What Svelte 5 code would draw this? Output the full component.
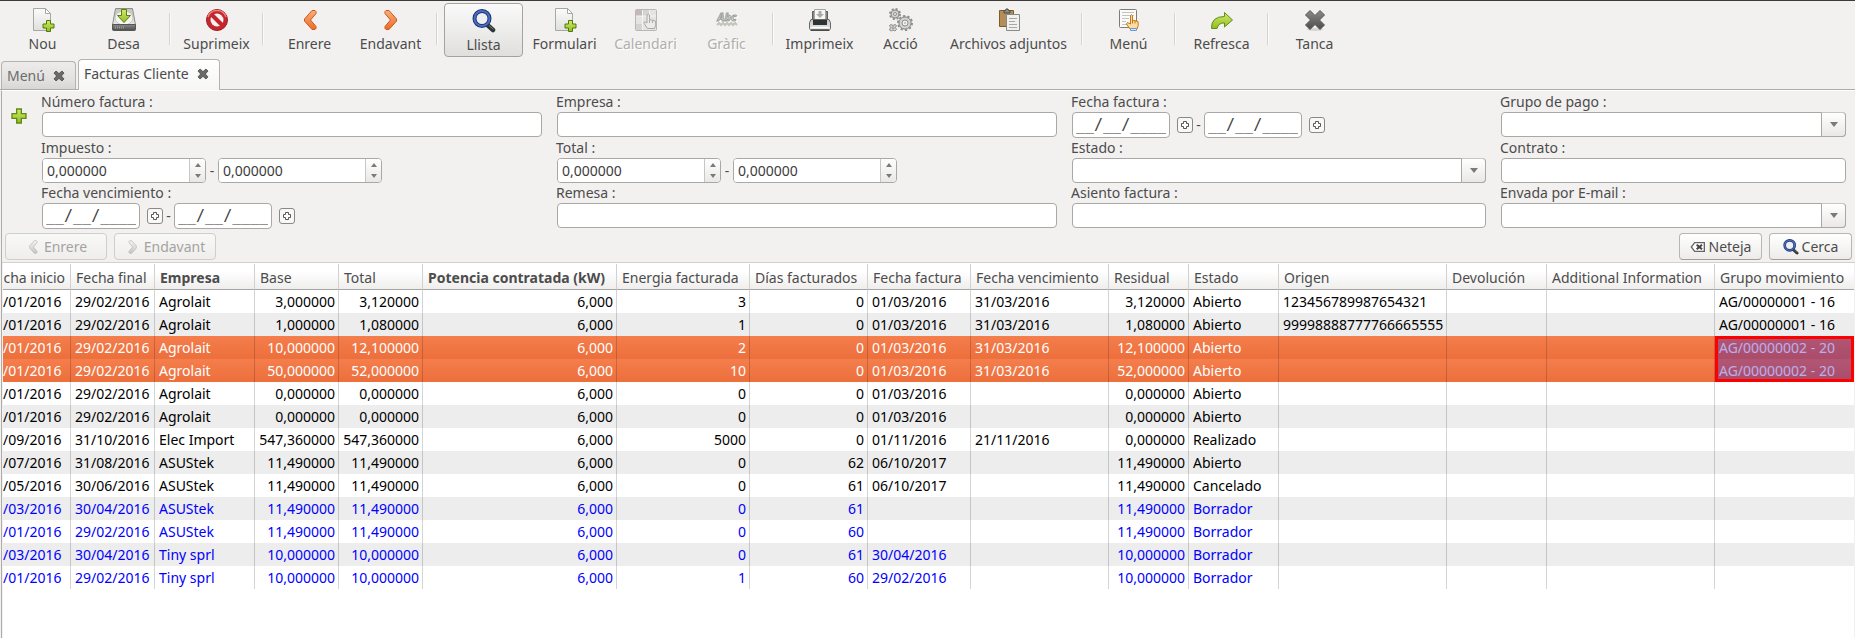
<script>
  const toolbar = [
    { label: 'Nou', icon: 'new' },
    { label: 'Desa', icon: 'save' },
    null,
    { label: 'Suprimeix', icon: 'delete' },
    null,
    { label: 'Enrere', icon: 'prev' },
    { label: 'Endavant', icon: 'next' },
    null,
    { label: 'Llista', icon: 'search', active: true },
    { label: 'Formulari', icon: 'new' },
    { label: 'Calendari', icon: 'calendar', disabled: true },
    { label: 'Gràfic', icon: 'graph', disabled: true },
    null,
    { label: 'Imprimeix', icon: 'print' },
    { label: 'Acció', icon: 'gears' },
    { label: 'Archivos adjuntos', icon: 'paste', wide: true },
    null,
    { label: 'Menú', icon: 'menu' },
    null,
    { label: 'Refresca', icon: 'refresh' },
    null,
    { label: 'Tanca', icon: 'close' }
  ];

  const fields = [
    { id: 'numero', label: 'Número factura :', type: 'text' },
    { id: 'empresa', label: 'Empresa :', type: 'text' },
    { id: 'fecha', label: 'Fecha factura :', type: 'date' },
    { id: 'grupo', label: 'Grupo de pago :', type: 'select' },
    { id: 'impuesto', label: 'Impuesto :', type: 'number' },
    { id: 'total', label: 'Total :', type: 'number' },
    { id: 'estado', label: 'Estado :', type: 'select' },
    { id: 'contrato', label: 'Contrato :', type: 'text' },
    { id: 'vencimiento', label: 'Fecha vencimiento :', type: 'date' },
    { id: 'remesa', label: 'Remesa :', type: 'text' },
    { id: 'asiento', label: 'Asiento factura :', type: 'text' },
    { id: 'envada', label: 'Envada por E-mail :', type: 'select' }
  ];

  const columns = [
    { name: 'cha inicio', width: 68, clipped: true },
    { name: 'Fecha final', width: 84 },
    { name: 'Empresa', width: 100, bold: true },
    { name: 'Base', width: 84, num: true },
    { name: 'Total', width: 84, num: true },
    { name: 'Potencia contratada (kW)', width: 194, num: true, bold: true },
    { name: 'Energia facturada', width: 133, num: true },
    { name: 'Días facturados', width: 118, num: true },
    { name: 'Fecha factura', width: 103 },
    { name: 'Fecha vencimiento', width: 138 },
    { name: 'Residual', width: 80, num: true },
    { name: 'Estado', width: 90 },
    { name: 'Origen', width: 168 },
    { name: 'Devolución', width: 100 },
    { name: 'Additional Information', width: 168 },
    { name: 'Grupo movimiento' }
  ];

  const rows = [
    ['/01/2016', '29/02/2016', 'Agrolait', '3,000000', '3,120000', '6,000', '3', '0', '01/03/2016', '31/03/2016', '3,120000', 'Abierto', '123456789987654321', '', '', 'AG/00000001 - 16'],
    ['/01/2016', '29/02/2016', 'Agrolait', '1,000000', '1,080000', '6,000', '1', '0', '01/03/2016', '31/03/2016', '1,080000', 'Abierto', '99998888777766665555', '', '', 'AG/00000001 - 16'],
    ['/01/2016', '29/02/2016', 'Agrolait', '10,000000', '12,100000', '6,000', '2', '0', '01/03/2016', '31/03/2016', '12,100000', 'Abierto', '', '', '', 'AG/00000002 - 20'],
    ['/01/2016', '29/02/2016', 'Agrolait', '50,000000', '52,000000', '6,000', '10', '0', '01/03/2016', '31/03/2016', '52,000000', 'Abierto', '', '', '', 'AG/00000002 - 20'],
    ['/01/2016', '29/02/2016', 'Agrolait', '0,000000', '0,000000', '6,000', '0', '0', '01/03/2016', '', '0,000000', 'Abierto', '', '', '', ''],
    ['/01/2016', '29/02/2016', 'Agrolait', '0,000000', '0,000000', '6,000', '0', '0', '01/03/2016', '', '0,000000', 'Abierto', '', '', '', ''],
    ['/09/2016', '31/10/2016', 'Elec Import', '547,360000', '547,360000', '6,000', '5000', '0', '01/11/2016', '21/11/2016', '0,000000', 'Realizado', '', '', '', ''],
    ['/07/2016', '31/08/2016', 'ASUStek', '11,490000', '11,490000', '6,000', '0', '62', '06/10/2017', '', '11,490000', 'Abierto', '', '', '', ''],
    ['/05/2016', '30/06/2016', 'ASUStek', '11,490000', '11,490000', '6,000', '0', '61', '06/10/2017', '', '11,490000', 'Cancelado', '', '', '', ''],
    ['/03/2016', '30/04/2016', 'ASUStek', '11,490000', '11,490000', '6,000', '0', '61', '', '', '11,490000', 'Borrador', '', '', '', ''],
    ['/01/2016', '29/02/2016', 'ASUStek', '11,490000', '11,490000', '6,000', '0', '60', '', '', '11,490000', 'Borrador', '', '', '', ''],
    ['/03/2016', '30/04/2016', 'Tiny sprl', '10,000000', '10,000000', '6,000', '0', '61', '30/04/2016', '', '10,000000', 'Borrador', '', '', '', ''],
    ['/01/2016', '29/02/2016', 'Tiny sprl', '10,000000', '10,000000', '6,000', '1', '60', '29/02/2016', '', '10,000000', 'Borrador', '', '', '', '']
  ];

  const selected = [2, 3];
</script>

{#snippet icon(name)}
  <svg class="icon" viewBox="0 0 24 24" aria-hidden="true">
    {#if name === 'new'}
      <path d="M2.5.5h12l5 5v17h-17z" fill="url(#g-paper)" stroke="#a6a8a4" />
      <path d="M14.5.5v5h5z" fill="#fff" stroke="#a6a8a4" stroke-linejoin="round" />
      <path d="M15.500 12.500h4v3.500h3.500v4h-3.500v3.500h-4v-3.500h-3.500v-4h3.500z" fill="url(#g-green)" stroke="#4f7a0b" />
    {:else if name === 'save'}
      <path d="M3.500.5h17l3 16.500h-23z" fill="url(#g-metal)" stroke="#8b8d89" stroke-linejoin="round" />
      <ellipse cx="12" cy="10" rx="9" ry="7" fill="#f4f4f3" stroke="#c3c4c1" />
      <path d="M.5 16.500h23v5q0 1-1 1h-21q-1 0-1-1z" fill="url(#g-dark)" stroke="#555753" />
      <path d="M3 19.500h9" stroke="#989a96" stroke-width="2" stroke-dasharray="1 1" />
      <path d="M9.500 1.500h5v6h4l-6.500 7-6.500-7h4z" fill="url(#g-green)" stroke="#5a7f0c" stroke-linejoin="round" />
    {:else if name === 'delete'}
      <circle cx="12" cy="12" r="10.500" fill="#c5262e" stroke="#a21b27" />
      <circle cx="12" cy="12" r="6.500" fill="#f5f2f0" />
      <path d="m7 7 10 10" stroke="#c5262e" stroke-width="4" />
      <path d="M3 9a9.500 9.500 0 0 1 18 0" fill="none" stroke="#ee7f7b" stroke-width="1.500" />
    {:else if name === 'prev'}
      <path d="M14 2.500h3l1 1v2L12.500 12l5.500 6.500v2l-1 1h-3L6.500 13v-2z" fill="url(#g-orange)" stroke="#c9581c" stroke-linejoin="round" />
    {:else if name === 'next'}
      <path d="M10 2.500H7l-1 1v2l5.500 6.500L6 18.500v2l1 1h3l7.500-8.500v-2z" fill="url(#g-orange)" stroke="#c9581c" stroke-linejoin="round" />
    {:else if name === 'search'}
      <path d="m16 16.500 5 4.500" stroke="#2e3436" stroke-width="4.500" stroke-linecap="round" />
      <path d="m17 16.500 4 3.500" stroke="#7d7f7b" stroke-linecap="round" />
      <circle cx="10" cy="9.500" r="7.500" fill="#eeeef2" stroke="#1e3472" stroke-width="4" />
      <circle cx="10" cy="9.500" r="7.500" fill="none" stroke="#4a6cc0" stroke-width="2" />
    {:else if name === 'calendar'}
      <rect x="1.500" y="1.500" width="21" height="21" rx="1" fill="#e6e4e2" stroke="#b9b7b4" />
      <path d="M2 2h7v6H2z" fill="#c4b9b7" />
      <path d="M9 2h6v6H9zM2 14h6v8H2z" fill="#d5d3d1" />
      <path d="M2 8h20M2 15h20M8.500 2v20M15.500 2v20" stroke="#f5f4f3" />
      <path d="M12.500 19 9.500 14.500q1-1.500 3.500.5V7q1.500-1.500 2.500 0v4.500l6 1.500q1 4-1 7.500h-7z" fill="#edebe9" stroke="#aaa8a5" stroke-linejoin="round" />
      <path d="M15.500 12v3M18.500 13v2" stroke="#aaa8a5" />
    {:else if name === 'graph'}
      <text x="12" y="13" text-anchor="middle" class="abc">Abc</text>
      <path d="m2 17 2-2 2 2 2-2 2 2 2-2 2 2 2-2 2 2 2-2 2 2" fill="none" stroke="#c2c4bc" stroke-width="2" />
    {:else if name === 'print'}
      <path d="M4.500 3.500h15v8h-15z" fill="#858783" stroke="#5d5f5b" />
      <path d="M6.500 1.500h11v10h-11z" fill="#f7f7f7" stroke="#a4a6a2" />
      <path d="M10.500 3h3v3h2.500l-4 4-4-4h2.500z" fill="#a9aba7" />
      <path d="M3 11.500h18l1.500 3v6q0 1-1 1h-19q-1 0-1-1v-6z" fill="url(#g-metal)" stroke="#666864" />
      <path d="M5 12h14v5H5z" fill="#2e3436" />
      <path d="M3 19.500h18" stroke="#fff" />
      <path d="M2.500 22.500h19" stroke="#4b4d49" />
    {:else if name === 'gears'}
      <g fill="#d2d3d0" stroke="#8d8f8b">
        <circle cx="6" cy="6" r="5" stroke-width="2" stroke-dasharray="2 1.930" />
        <circle cx="6" cy="6" r="4" />
        <circle cx="6" cy="6" r="1.500" fill="#f2f1f0" />
        <circle cx="16" cy="15" r="7" stroke-width="2" stroke-dasharray="2.200 2.200" />
        <circle cx="16" cy="15" r="6" />
        <circle cx="16" cy="15" r="3" fill="#f2f1f0" />
        <path d="M.5 17.500 2 16.500l2 1 2-1 1.500 1-1 2 1 2-1.500 1.500-2-1-2 1L.5 22l1-2.500z" />
        <circle cx="4" cy="19.700" r="1" fill="#f2f1f0" />
      </g>
      <circle cx="16" cy="15" r=".8" fill="#8d8f8b" />
    {:else if name === 'paste'}
      <path d="M2.500 2.500h14v16h-14z" fill="#b58d56" stroke="#7d5a2a" />
      <path d="M7 5V2.500h1.500L9 1h2l.5 1.500H13V5z" fill="#8c8e8a" stroke="#4b4d49" />
      <path d="M9.500 6.500h13v16h-13z" fill="#f0f1ef" stroke="#888a85" />
      <path d="M12 10.500h8M12 13.500h6M12 16.500h8M12 19.500h8" stroke="#a7a9a5" />
    {:else if name === 'menu'}
      <rect x="2.500" y="1.500" width="17" height="18" rx="1" fill="#fbfbfa" stroke="#7b7d79" />
      <path d="M5 4.500h12M5 7.500h12M5 10.500h7M5 13.500h4M5 16.500h5" stroke="#c2c4c0" />
      <path d="M13 21 9.500 16l1-1.500 3 1.500V7.500q1-1.500 2 0V12l5.500 1.500q1 4-1 7.500z" fill="#fcdca4" stroke="#c7780a" stroke-linejoin="round" />
      <path d="M15.500 12v3.500M18 13v2.500" stroke="#c7780a" />
      <path d="M13.500 20.500h6v2h-6z" fill="#dce8f6" stroke="#6c9ad0" />
    {:else if name === 'refresh'}
      <path d="M1.500 20.500Q1 8.500 14.500 8.500v-4l8 7.500-8 7v-4q-6-.5-7.500 5.500z" fill="url(#g-green)" stroke="#5e8f14" stroke-linejoin="round" />
    {:else if name === 'close'}
      <ellipse cx="12" cy="21.500" rx="8" ry="1.500" fill="#d6d4d2" />
      <path d="M2.500 7 7 2.500l5 5 5-5L21.500 7l-5 5 5 5-4.500 4.500-5-5-5 5L2.500 17l5-5z" fill="url(#g-dark)" stroke="#555753" stroke-linejoin="round" />
    {:else if name === 'clear'}
      <path d="M7 5.500h14.500v13H7L2 12z" fill="#fff" stroke="#666" stroke-width="2" />
      <path d="m10 8.500 8 7m0-7-8 7" stroke="#444" stroke-width="3" />
    {:else if name === 'plus'}
      <path d="M8.500 1.500h7v7h7v7h-7v7h-7v-7h-7v-7h7z" fill="url(#g-green)" stroke="#5e8a1a" stroke-width="2" />
    {:else if name === 'pick'}
      <path d="M9 5h6v4h4v6h-4v4H9v-4H5V9h4z" fill="#fff" stroke="#555" stroke-width="2" />
    {:else if name === 'tab'}
      <path d="M3.500 7 7 3.500l5 4.500 5-4.500L20.500 7 16 12l4.500 5-3.500 3.500-5-4.500-5 4.500L3.500 17 8 12z" fill="#6a6b68" stroke="#4c4c4c" stroke-width="1.500" stroke-linejoin="round" />
    {/if}
  </svg>
{/snippet}

<svg class="defs" aria-hidden="true">
  <linearGradient id="g-paper" x2="0" y2="1"><stop stop-color="#fbfbfb" /><stop offset="1" stop-color="#dfe0de" /></linearGradient>
  <linearGradient id="g-green" x2="0" y2="1"><stop stop-color="#d5e86a" /><stop offset="1" stop-color="#8fbf22" /></linearGradient>
  <linearGradient id="g-metal" x2="0" y2="1"><stop stop-color="#c2c3c1" /><stop offset="1" stop-color="#eaebe9" /></linearGradient>
  <linearGradient id="g-dark" x2="0" y2="1"><stop stop-color="#8a8b88" /><stop offset="1" stop-color="#4c4d4a" /></linearGradient>
  <linearGradient id="g-orange" x2="0" y2="1"><stop stop-color="#f7b07a" /><stop offset="1" stop-color="#ee6b2a" /></linearGradient>
</svg>

<div class="app">
  <div class="toolbar" role="toolbar">
    {#each toolbar as item}
      {#if item}
        <button class="tool" class:active={item.active} class:wide={item.wide} disabled={item.disabled}>
          {@render icon(item.icon)}
          <span>{item.label}</span>
        </button>
      {:else}
        <span class="sep"></span>
      {/if}
    {/each}
  </div>

  <nav class="tabs">
    <button class="tab">Menú {@render icon('tab')}</button>
    <button class="tab current">Facturas Cliente {@render icon('tab')}</button>
  </nav>

  <main>
    <form onsubmit={(e) => e.preventDefault()}>
      <button type="button" class="more" aria-label="+">{@render icon('plus')}</button>
      <div class="grid">
        {#each fields as f}
          <div class="field">
            <label for={f.id}>{f.label}</label>
            {#if f.type === 'text'}
              <input class="box" id={f.id} type="text" />
            {:else if f.type === 'select'}
              <div class="combo">
                <select class="box" id={f.id}><option></option></select>
                <span class="arrow"><i class="down"></i></span>
              </div>
            {:else if f.type === 'number'}
              <div class="range">
                {#each [0, 1] as n}
                  {#if n}<span class="dash">-</span>{/if}
                  <div class="spin">
                    <input id={n ? `${f.id}-2` : f.id} aria-label={n ? f.label : undefined} type="text" inputmode="decimal" value="0,000000" />
                    <div class="steps">
                      <button type="button" aria-label="+"><i class="up"></i></button>
                      <button type="button" aria-label="-"><i class="down"></i></button>
                    </div>
                  </div>
                {/each}
              </div>
            {:else}
              <div class="range">
                {#each [0, 1] as n}
                  {#if n}<span class="dash">-</span>{/if}
                  <input class="box date" id={n ? `${f.id}-2` : f.id} aria-label={n ? f.label : undefined} type="text" value="__/__/____" />
                  <button type="button" class="pick" aria-label={f.label}>{@render icon('pick')}</button>
                {/each}
              </div>
            {/if}
          </div>
        {/each}
      </div>
      <div class="actions">
        <button type="button" class="btn nav" disabled>{@render icon('prev')}Enrere</button>
        <button type="button" class="btn nav" disabled>{@render icon('next')}Endavant</button>
        <span class="spacer"></span>
        <button type="button" class="btn">{@render icon('clear')}Neteja</button>
        <button type="submit" class="btn">{@render icon('search')}Cerca</button>
      </div>
    </form>

    <div class="list">
      <table>
        <colgroup>
          {#each columns as c}
            <col style:width={c.width ? `${c.width}px` : undefined} />
          {/each}
        </colgroup>
        <thead>
          <tr>
            {#each columns as c}
              <th class:bold={c.bold} class:clipped={c.clipped}>{c.name}</th>
            {/each}
          </tr>
        </thead>
        <tbody>
          {#each rows as row, r}
            <tr class:selected={selected.includes(r)} class:draft={row[11] === 'Borrador'}>
              {#each row as cell, c}
                <td class:num={columns[c].num} class:clipped={columns[c].clipped}>
                  {cell}
                  {#if r === selected[0] && c === row.length - 1}<span class="highlight"></span>{/if}
                </td>
              {/each}
            </tr>
          {/each}
        </tbody>
      </table>
    </div>
  </main>
</div>

<style>
  :global(body) { background: #f2f1f0; }
  .app, .app button, .app input, .app select {
    font: 14px/20px 'Noto Sans', 'Open Sans', sans-serif;
    color: #4c4c4c;
  }
  .app { display: flex; flex-direction: column; min-height: 100vh; background: #f2f1f0; border-top: 1px solid #3c3b37; box-sizing: border-box; }
  .app * { box-sizing: border-box; }
  .defs { position: absolute; width: 0; height: 0; }
  button { margin: 0; padding: 0; background: none; border: 0; white-space: nowrap; }
  .icon { width: 24px; height: 24px; flex: none; display: block; }
  .abc { font: italic bold 11px 'Noto Sans', sans-serif; fill: #d4d4d0; stroke: #9d9f9b; stroke-width: 1px; }

  .toolbar { display: flex; padding: 2px 2px 0; height: 58px; }
  .tool { width: 79px; height: 54px; margin: 0 1px; padding-top: 5px; display: flex; flex-direction: column; align-items: center; gap: 2px; border-radius: 4px; }
  .wide { width: 133px; }
  .tool.active { border: 1px solid #a5a3a0; background: linear-gradient(#fafafa, #e0dfdd); }
  .app .tool:disabled { color: #b0aeac; text-shadow: 1px 1px #fff; }
  .sep { width: 2px; height: 32px; margin: 10px 5px 0; border-left: 1px solid #d5d3d1; border-right: 1px solid #fafafa; }

  .tabs { display: flex; align-items: flex-end; gap: 2px; height: 31px; padding-left: 1px; border-bottom: 1px solid #aeaca9; }
  .app .tab { display: flex; align-items: center; height: 28px; padding: 0 9px 0 5px; gap: 7px; color: #6c6c6c; border: 1px solid #b5b3b0; border-bottom: 0; border-radius: 4px 4px 0 0; background: linear-gradient(#edecea, #e2e0de 70%, #d8d6d4); }
  .app .tab.current { height: 31px; margin-bottom: -1px; padding-bottom: 2px; color: #4c4c4c; background: linear-gradient(#fff, #f6f6f5); }
  .tab .icon { width: 14px; height: 14px; }

  main { flex: 1; display: flex; flex-direction: column; margin-left: 1px; border-left: 1px solid #aeaca9; border-top: 1px solid #fff; }
  form { display: grid; grid-template-columns: 40px 1fr; padding: 1px 0 0; border-bottom: 1px solid #d3d1ce; }
  .more { width: 16px; height: 16px; margin: 16px 0 0 9px; }
  .more .icon { width: 16px; height: 16px; }
  .grid { display: grid; grid-template-columns: 500fr 500fr 414fr 345fr; column-gap: 15px; padding-right: 9px; }
  label { display: block; height: 20px; margin-left: -1px; }
  .box { display: block; width: 100%; height: 25px; padding: 0 4px; background: #fff; border: 1px solid #aaa8a4; border-radius: 4px; outline: 0; }
  .combo { display: grid; }
  .combo > * { grid-area: 1 / 1; }
  select { appearance: none; }
  .arrow { justify-self: end; width: 25px; height: 25px; display: grid; place-items: center; pointer-events: none; border: 1px solid #aaa8a4; border-top-color: #c8c6c3; border-radius: 0 4px 4px 0; background: linear-gradient(#fff, #e9e8e6); }
  i { display: block; width: 0; height: 0; border: 4px solid transparent; }
  .down { border-top: 5px solid #7a7a7a; border-bottom: 0; }
  .up { border-bottom: 5px solid #7a7a7a; border-top: 0; }
  .range { display: flex; align-items: center; }
  .dash { width: 12px; text-align: center; }
  .spin { display: flex; width: 164px; height: 25px; border: 1px solid #aaa8a4; border-radius: 4px; overflow: hidden; background: #fff; }
  .app .spin input { flex: 1; min-width: 0; padding: 0 4px; border: 0; outline: 0; color: #3c3c3c; }
  .steps { width: 16px; display: flex; flex-direction: column; border-left: 1px solid #c8c6c3; background: linear-gradient(#fff, #e9e8e6); }
  .steps button { flex: 1; display: grid; place-items: center; }
  .steps i { border-width: 3px; }
  .steps .up { border-bottom-width: 4px; border-top: 0; }
  .steps .down { border-top-width: 4px; border-bottom: 0; }
  .app .date { width: 98px; height: 26px; padding: 0 3px; font: 15px/20px 'DejaVu Sans Mono', monospace; color: #3c3c3c; }
  .pick { width: 16px; height: 16px; margin: 0 0 0 7px; display: grid; place-items: center; border: 1px solid #8a8885; border-radius: 3px; background: #f8f8f7; }
  .pick .icon { width: 12px; height: 12px; }
  .pick + .dash { width: 11px; }

  .actions { grid-column: 1 / -1; display: flex; gap: 7px; padding: 4px 3px 2px; }
  .spacer { flex: 1; }
  .btn { width: 83px; height: 27px; display: flex; align-items: center; justify-content: center; gap: 3px; border: 1px solid #b8b6b3; border-bottom-color: #a09e9b; border-radius: 4px; background: linear-gradient(#fff, #edecea); }
  .btn .icon { width: 16px; height: 16px; }
  .btn.nav { width: 102px; }
  .app .btn:disabled { color: #a5a3a1; border-color: #d0cecb; background: linear-gradient(#f8f8f7, #efeeec); }
  .btn:disabled .icon { filter: grayscale(1) brightness(1.3); opacity: 0.6; }

  .list { flex: 1; margin: 0 1px; background: #fff; border-top: 1px solid #fff; overflow: hidden; }
  table { width: 100%; table-layout: fixed; border-collapse: separate; border-spacing: 0; }
  th { height: 26px; padding: 2px 0 0 5px; font-weight: 400; text-align: left; white-space: nowrap; background: linear-gradient(#fff 30%, #efeeed); border-right: 1px solid #d3d1ce; border-bottom: 1px solid #a8a6a2; }
  th.bold { font-weight: 700; }
  td { height: 23px; padding: 0 3px 0 4px; line-height: 23px; color: #000; white-space: nowrap; border-right: 1px solid rgba(0, 0, 0, 0.17); }
  .num { text-align: right; }
  .clipped { text-align: right; padding: 0 9px 0 0; overflow: hidden; }
  th.clipped { padding: 2px 5px 0 0; }
  tr:nth-child(even) td { background: #ededed; }
  .draft td { color: #0000ff; }
  tr.selected td { color: #fff; background: linear-gradient(#f47e4c, #ec6f3c); }
  td:last-child, th:last-child { border-right: 0; }
  td:last-child { position: relative; }
  .highlight { position: absolute; z-index: 1; inset: 0; height: 46px; border: 3px solid #f00; background: rgba(33, 3, 203, 0.32); }
</style>
